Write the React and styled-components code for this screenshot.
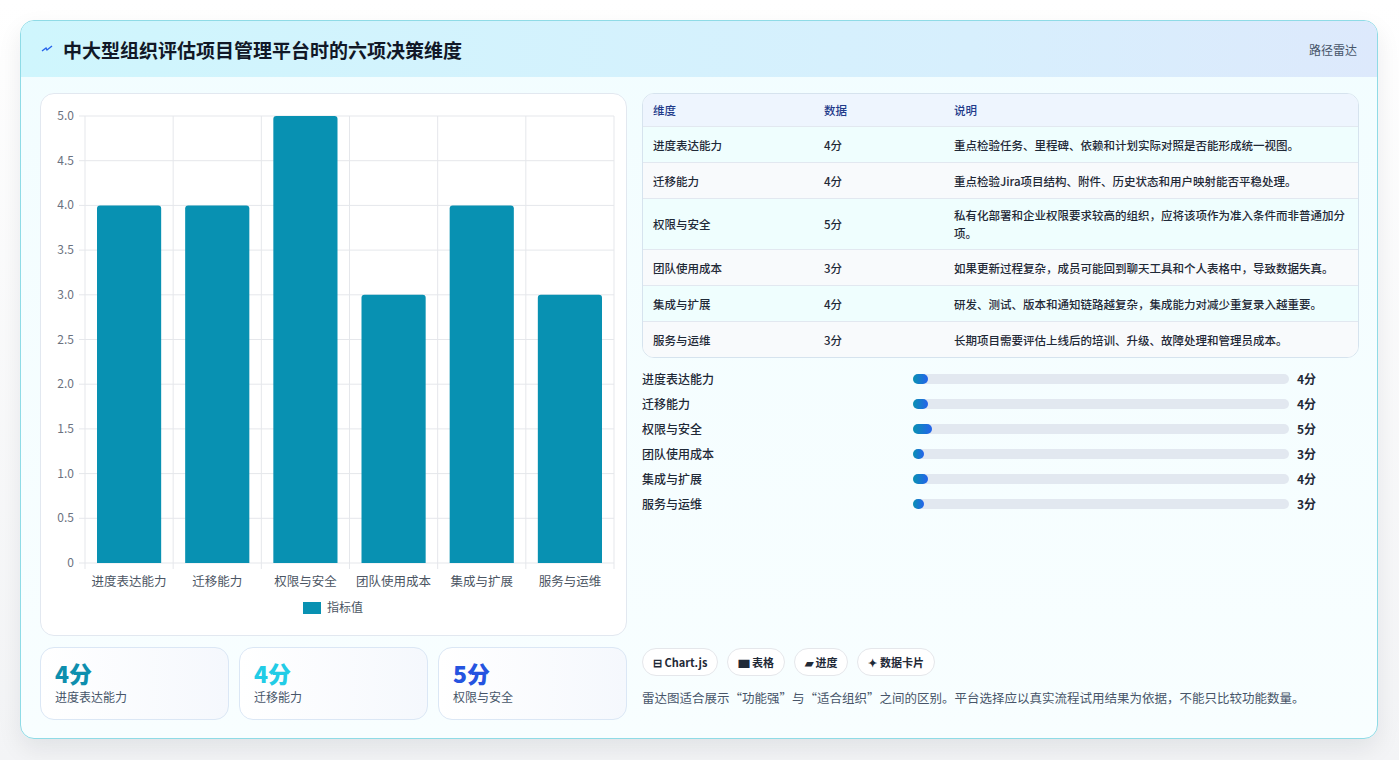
import React from "react";
import styled, { createGlobalStyle } from "styled-components";

const Global = createGlobalStyle`
  html, body { margin: 0; background: #f3f4f6; }
  body { font-family: "Noto Sans CJK SC", "Noto Sans", sans-serif; color: #1f2937; }
`;

const Page = styled.div`
  padding: 20px 21px 20px 20px;
  height: 760px;
  box-sizing: border-box;
  background: linear-gradient(#ffffff, #f3f4f6);
`;

const Card = styled.div`
  border: 1px solid #8fdbe6;
  border-radius: 14px;
  overflow: hidden;
  background: linear-gradient(180deg, #f2fdff, #f8feff);
  box-shadow: 0 10px 24px rgba(15, 23, 42, 0.08);
  height: 719px;
  box-sizing: border-box;
`;

const Header = styled.div`
  height: 56px;
  display: flex;
  align-items: center;
  justify-content: space-between;
  padding: 0 20px;
  background: linear-gradient(90deg, #cff6fd, #d7effd 70%, #dde9fc);
`;

const Title = styled.h1`
  margin: 0;
  font-size: 19px;
  font-weight: 700;
  color: #111827;
  display: flex;
  align-items: center;
  gap: 10px;
`;

const Tag = styled.span`
  font-size: 12px;
  color: #475569;
`;

const Body = styled.div`
  display: grid;
  grid-template-columns: 587px 1fr;
  gap: 15px;
  padding: 16px 18px 0 19px;
`;

const Col = styled.div`
  display: flex;
  flex-direction: column;
  gap: 11px;
`;

const ChartCard = styled.div`
  height: 543px;
  box-sizing: border-box;
  background: #fff;
  border: 1px solid #e2e8f0;
  border-radius: 14px;
`;

const Stats = styled.div`
  display: grid;
  grid-template-columns: repeat(3, 1fr);
  gap: 10px;
`;

const Stat = styled.div`
  height: 73px;
  box-sizing: border-box;
  border: 1px solid #dbe7f5;
  border-radius: 14px;
  background: linear-gradient(90deg, #fff, #f5f8fd);
  padding: 10px 14px;
`;

const StatValue = styled.div`
  font-size: 23px;
  font-weight: 800;
  line-height: 30px;
  color: ${(p) => p.color};
`;

const StatLabel = styled.div`
  font-size: 12px;
  color: #475569;
`;

const Table = styled.div`
  border: 1px solid #d6e3ee;
  border-radius: 12px;
  overflow: hidden;
  background: #fff;
  font-size: 11.5px;
  font-weight: 500;
`;

const Row = styled.div`
  display: grid;
  grid-template-columns: 171px 130px 1fr;
  padding: 0 10px;
  min-height: 35px;
  align-items: center;
  border-top: 1px solid #e2e8f0;
  background: ${(p) => (p.head ? "#eef5fe" : p.alt ? "#f8fafc" : "#effefe")};
  color: ${(p) => (p.head ? "#1e3a8a" : "#1f2937")};
  ${(p) => p.head && "min-height: 32px; border-top: none;"}
  & > span:last-child { padding: 7px 0; line-height: 18px; }
`;

const Bars = styled.div`
  margin-top: 11px;
  display: flex;
  flex-direction: column;
  gap: 6px;
`;

const BarRow = styled.div`
  display: grid;
  grid-template-columns: 271px 376px 1fr;
  align-items: center;
  height: 19px;
  font-size: 12px;
  font-weight: 500;
  & > b { padding-left: 8px; font-size: 12px; }
`;

const Track = styled.div`
  height: 10px;
  border-radius: 5px;
  background: #e2e8f0;
`;

const Fill = styled.div`
  height: 100%;
  border-radius: 5px;
  background: linear-gradient(90deg, #0891b2, #2563eb);
`;

const Foot = styled.div`
  margin-top: auto;
  padding-bottom: 14px;
`;

const Chips = styled.div`
  display: flex;
  gap: 9px;
  margin-bottom: 12px;
`;

const Chip = styled.span`
  border: 1px solid #e5e7eb;
  border-radius: 14px;
  padding: 5px 10px;
  font-size: 11px;
  font-weight: 600;
  background: #fff;
  color: #1f2937;
`;

const Note = styled.div`
  font-size: 12.5px;
  color: #475569;
`;

const dims = [
  ["进度表达能力", 4, "重点检验任务、里程碑、依赖和计划实际对照是否能形成统一视图。"],
  ["迁移能力", 4, "重点检验Jira项目结构、附件、历史状态和用户映射能否平稳处理。"],
  ["权限与安全", 5, "私有化部署和企业权限要求较高的组织，应将该项作为准入条件而非普通加分项。"],
  ["团队使用成本", 3, "如果更新过程复杂，成员可能回到聊天工具和个人表格中，导致数据失真。"],
  ["集成与扩展", 4, "研发、测试、版本和通知链路越复杂，集成能力对减少重复录入越重要。"],
  ["服务与运维", 3, "长期项目需要评估上线后的培训、升级、故障处理和管理员成本。"],
];

function Chart() {
  const x0 = 44, x1 = 573, y0 = 22, y1 = 469;
  const cw = (x1 - x0) / 6;
  const ticks = [0, 0.5, 1, 1.5, 2, 2.5, 3, 3.5, 4, 4.5, 5];
  const yOf = (v) => y1 - (v / 5) * (y1 - y0);
  return (
    <svg width="586" height="541" style={{ display: "block" }} fontFamily="Noto Sans CJK SC, sans-serif">
      {ticks.map((t) => (
        <g key={t}>
          <line x1={x0 - 6} x2={x1} y1={yOf(t)} y2={yOf(t)} stroke="#e5e7eb" />
          <text x={x0 - 11} y={yOf(t) + 4} fontSize="12" fill="#6b7280" textAnchor="end">
            {t === 0 ? "0" : t.toFixed(1)}
          </text>
        </g>
      ))}
      {[0, 1, 2, 3, 4, 5, 6].map((i) => (
        <line key={i} x1={x0 + i * cw} x2={x0 + i * cw} y1={y0} y2={y1 + 6} stroke="#e5e7eb" />
      ))}
      {dims.map(([n, v], i) => (
        <g key={n}>
          <path
            d={`M${x0 + i * cw + 12} ${y1} V${yOf(v) + 3} q0 -3 3 -3 H${x0 + i * cw + cw - 15} q3 0 3 3 V${y1} Z`}
            fill="#0891b2"
          />
          <text x={x0 + i * cw + cw / 2} y={y1 + 23} fontSize="12.5" fill="#4b5563" textAnchor="middle">{n}</text>
        </g>
      ))}
      <rect x="262" y="508" width="18" height="12" fill="#0891b2" />
      <text x="286" y="518" fontSize="12" fill="#4b5563">指标值</text>
    </svg>
  );
}

export default function App() {
  return (
    <Page>
      <Global />
      <Card>
        <Header>
          <Title>
            <svg width="12" height="8" viewBox="0 0 12 8"><path d="M1 6 L5 3 L6 5 L11 1" stroke="#2563eb" strokeWidth="1.4" fill="none" /></svg>
            中大型组织评估项目管理平台时的六项决策维度
          </Title>
          <Tag>路径雷达</Tag>
        </Header>
        <Body>
          <Col>
            <ChartCard><Chart /></ChartCard>
            <Stats>
              <Stat><StatValue color="#0e8fae">4分</StatValue><StatLabel>进度表达能力</StatLabel></Stat>
              <Stat><StatValue color="#22cce6">4分</StatValue><StatLabel>迁移能力</StatLabel></Stat>
              <Stat><StatValue color="#2554e0">5分</StatValue><StatLabel>权限与安全</StatLabel></Stat>
            </Stats>
          </Col>
          <Col style={{ gap: 0, height: 628 }}>
            <Table>
              <Row head><span>维度</span><span>数据</span><span>说明</span></Row>
              {dims.map(([n, v, d], i) => (
                <Row key={n} alt={i % 2 === 1}><span>{n}</span><span>{v}分</span><span>{d}</span></Row>
              ))}
            </Table>
            <Bars>
              {dims.map(([n, v]) => (
                <BarRow key={n}>
                  <span>{n}</span>
                  <Track><Fill style={{ width: `${v}%` }} /></Track>
                  <b>{v}分</b>
                </BarRow>
              ))}
            </Bars>
            <Foot>
              <Chips>
                <Chip>⊟ Chart.js</Chip>
                <Chip>▆ 表格</Chip>
                <Chip>▰ 进度</Chip>
                <Chip>✦ 数据卡片</Chip>
              </Chips>
              <Note>雷达图适合展示“功能强”与“适合组织”之间的区别。平台选择应以真实流程试用结果为依据，不能只比较功能数量。</Note>
            </Foot>
          </Col>
        </Body>
      </Card>
    </Page>
  );
}
